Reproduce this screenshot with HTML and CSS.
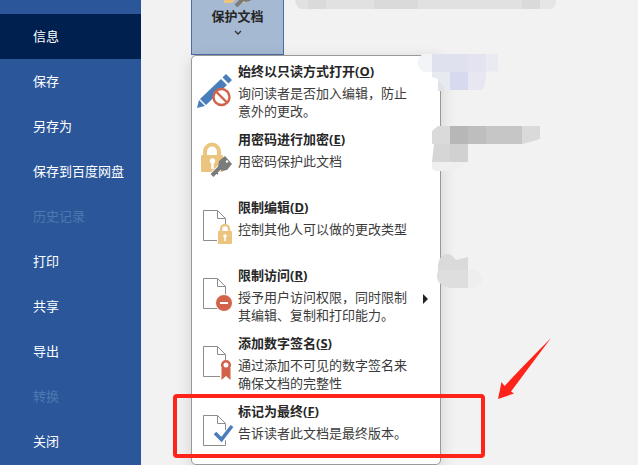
FILE: index.html
```html
<!DOCTYPE html>
<html lang="zh-CN">
<head>
    <meta charset="UTF-8">
    <meta name="viewport" content="width=device-width, initial-scale=1.0">
    <title>信息</title>
    <link rel="stylesheet" href="styles.css">
</head>
<body>
    <div class="backstage">
        <nav class="sidebar">
            <a href="#" class="active">信息</a>
            <a href="#">保存</a>
            <a href="#">另存为</a>
            <a href="#">保存到百度网盘</a>
            <a href="#" class="disabled" aria-disabled="true">历史记录</a>
            <a href="#">打印</a>
            <a href="#">共享</a>
            <a href="#">导出</a>
            <a href="#" class="disabled" aria-disabled="true">转换</a>
            <a href="#">关闭</a>
        </nav>
        <main class="content">
            <button class="protect" type="button">
                <svg class="icon" viewBox="0 0 36 36">
                    <path d="M9 12V6a7 7 0 0 1 14 0v6" fill="none" stroke="#ebc57f" stroke-width="4"/>
                    <rect x="4" y="11" width="22" height="21" rx="1" fill="#ebc57f"/>
                    <path d="M15 34l11-11" stroke="#a6b9d3" stroke-width="7"/>
                    <path d="M16 35l10-10" stroke="#7b7b7b" stroke-width="4"/>
                    <path d="M21 28l1-6 6-6 8 7-6 7-5 1z" fill="#7b7b7b"/>
                </svg>
                <span>保护文档</span>
                <svg class="chevron" viewBox="0 0 8 6"><path d="M1 1l3 3 3-3" fill="none" stroke="#333" stroke-width="1.4"/></svg>
            </button>

            <div class="menu">
                <button class="item" type="button">
                    <svg class="icon" viewBox="0 0 36 48">
                        <path d="M1 46l2-8 6 6z" fill="#4a7ebb"/>
                        <path d="M4 37L25 17l6 6-21 20z" fill="#4a7ebb"/>
                        <path d="M26.500 15.500L30 12l6 6-3.500 3.500z" fill="#4a7ebb"/>
                        <circle cx="25.500" cy="35" r="8" fill="#fff" stroke="#d0634a" stroke-width="2.400"/>
                        <path d="M20 29.500l11 11" stroke="#d0634a" stroke-width="2.400"/>
                    </svg>
                    <span class="text">
                        <strong>始终以只读方式打开(<u>O</u>)</strong>
                        <span>询问读者是否加入编辑，防止意外的更改。</span>
                    </span>
                </button>
                <button class="item" type="button">
                    <svg class="icon" viewBox="0 0 36 48">
                        <path d="M9 26v-4.500a7 7 0 0 1 14 0V26" fill="none" stroke="#ebc57f" stroke-width="4"/>
                        <rect x="5" y="25" width="22" height="17" rx="1" fill="#ebc57f"/>
                        <circle cx="16.500" cy="31" r="2.700" fill="#fff"/>
                        <path d="M16.500 31v8" stroke="#fff" stroke-width="2.500"/>
                        <path d="M16 45.500l9-9" stroke="#fff" stroke-width="6"/>
                        <path d="M16 45.500l9-9" stroke="#7b7b7b" stroke-width="4"/>
                        <path d="M22 37l1-6 6-5 7 8-5 6-5 1z" fill="#7b7b7b"/>
                        <path d="M19 42l3 2" stroke="#7b7b7b" stroke-width="2"/>
                        <circle cx="31" cy="31.500" r="1.200" fill="#fff"/>
                    </svg>
                    <span class="text">
                        <strong>用密码进行加密(<u>E</u>)</strong>
                        <span>用密码保护此文档</span>
                    </span>
                </button>
                <button class="item" type="button">
                    <svg class="icon" viewBox="0 0 36 48">
                        <path d="M7.500 12.500h14l8 8v22h-22zM21.500 12.500v8h8" fill="#fff" stroke="#8c8c8c"/>
                        <rect x="21" y="31" width="16" height="17" fill="#fff"/>
                        <path d="M25 34v-3a3.500 3.500 0 0 1 8 0v3" fill="#fff" stroke="#ebc57f" stroke-width="2.400"/>
                        <rect x="22" y="33" width="14" height="13" rx="1" fill="#ebc57f"/>
                        <circle cx="29" cy="38" r="1.800" fill="#fff"/>
                        <path d="M29 38v5" stroke="#fff" stroke-width="1.600"/>
                    </svg>
                    <span class="text">
                        <strong>限制编辑(<u>D</u>)</strong>
                        <span>控制其他人可以做的更改类型</span>
                    </span>
                </button>
                <button class="item" type="button">
                    <svg class="icon" viewBox="0 0 36 48">
                        <path d="M7.500 12.500h14l8 8v22h-22zM21.500 12.500v8h8" fill="#fff" stroke="#8c8c8c"/>
                        <circle cx="28" cy="37" r="8.500" fill="#d0634a" stroke="#fff"/>
                        <path d="M24 37h8" stroke="#fff" stroke-width="2"/>
                    </svg>
                    <span class="text">
                        <strong>限制访问(<u>R</u>)</strong>
                        <span>授予用户访问权限，同时限制其编辑、复制和打印能力。</span>
                    </span>
                    <svg class="more" viewBox="0 0 5 10"><path d="M0 0l5 5-5 5z" fill="#222"/></svg>
                </button>
                <button class="item" type="button">
                    <svg class="icon" viewBox="0 0 36 48">
                        <path d="M7.500 12.500h14l8 8v22h-22zM21.500 12.500v8h8" fill="#fff" stroke="#8c8c8c"/>
                        <path d="M24 26h12v20H24z" fill="#fff"/>
                        <path d="M25.500 34h9v12l-4.500-4-4.500 4z" fill="#d0634a"/>
                        <circle cx="30" cy="31" r="3.800" fill="#fff" stroke="#d0634a" stroke-width="2.600"/>
                    </svg>
                    <span class="text">
                        <strong>添加数字签名(<u>S</u>)</strong>
                        <span>通过添加不可见的数字签名来确保文档的完整性</span>
                    </span>
                </button>
                <button class="item" type="button">
                    <svg class="icon" viewBox="0 0 36 48">
                        <path d="M7.500 13.500h14l8 8v22h-22zM21.500 13.500v8h8" fill="#fff" stroke="#8c8c8c"/>
                        <path d="M19 31l7 7 10-14" fill="none" stroke="#fff" stroke-width="6"/>
                        <path d="M19 31l6.500 6.500L36 24" fill="none" stroke="#4a7ebb" stroke-width="3.600"/>
                    </svg>
                    <span class="text">
                        <strong>标记为最终(<u>F</u>)</strong>
                        <span>告诉读者此文档是最终版本。</span>
                    </span>
                </button>
            </div>

            <!-- blurred-out file details -->
            <svg class="mosaic" viewBox="0 0 497 300">
                <path d="M154 0h261q0 9-8 9H160q-5-2-6-9z" fill="#e1e1e1"/>
                <path d="M167 0h18v9h-18zM233 0h44v9h-44zM381 0h18v9h-18z" fill="#dadada"/>
                <path d="M399 0h16q0 9-8 9h-8z" fill="#e6e6e6"/>
                <path d="M291 54h-9c-8 5-7 14 1 18h8z" fill="#f3f4f7"/>
                <path d="M291 54h36v18h-36z" fill="#dfe1ee"/>
                <path d="M327 54h18v18h-18z" fill="#e3e4ef"/>
                <path d="M345 54h12v17l-12 1z" fill="#eaebf2"/>
                <path d="M291 72h18v18h-6q-5-1-6-11l-6-2z" fill="#e8eaf1"/>
                <path d="M309 72h18v18h-18z" fill="#d7daee"/>
                <path d="M327 72h18q0 18-6 18h-12z" fill="#e6e7f1"/>
                <path d="M297 80l6 7v4h-6z" fill="#e1e2e5"/>
                <path d="M309 126h-12l-6 5v13h18z" fill="#dadada"/>
                <path d="M309 126h18v18h-18z" fill="#b7b7b7"/>
                <path d="M327 126h18v18h-18z" fill="#bebebe"/>
                <path d="M345 126h36v18h-36z" fill="#c6c6c6"/>
                <path d="M381 126h18v13l-17 5h-1z" fill="#dadada"/>
                <path d="M309 144h-16l-2 18h18z" fill="#d6d6d6"/>
                <path d="M309 144h18v18h-18z" fill="#d1d1d1"/>
                <path d="M291 162h36q-8 7-20 9h-12l-4-2z" fill="#efefef"/>
                <path d="M297 270q-1-14 9-16 5 0 9 6l12-3v13z" fill="#dadada"/>
                <path d="M297 270h30v18h-18q-17-4-12-18z" fill="#dedede"/>
                <path d="M327 270h7q14 10 0 18h-7z" fill="#eee"/>
            </svg>
            <div class="highlight"></div>
            <svg class="arrow" viewBox="0 0 54 62">
                <path d="M53 0Q32 28 13 53.500l3 2L0 61l3.500-17 3 4Q28 25 53 0z" fill="#ff2419"/>
            </svg>
        </main>
    </div>
</body>
</html>
```
FILE: styles.css
```css
* {
    box-sizing: border-box;
}
body {
    margin: 0;
    font-family: "Noto Sans", "Noto Sans CJK SC", sans-serif;
    font-size: 13px;
    line-height: 18px;
    color: #262626;
    background-color: #f2f2f2;
}
button {
    font: inherit;
    color: inherit;
    border: none;
    background: none;
    cursor: pointer;
}
.backstage {
    display: flex;
    height: 100vh;
    overflow: hidden;
}
.sidebar {
    flex: none;
    width: 141px;
    padding-top: 14px;
    background-color: #2b579a;
}
.sidebar a {
    display: flex;
    align-items: center;
    height: 45px;
    padding: 0 0 2px 33px;
    color: #fff;
    text-decoration: none;
    white-space: nowrap;
}
.sidebar a.active {
    background-color: #002050;
}
.sidebar a.disabled {
    color: #4e78af;
}
.content {
    position: relative;
    flex: 1;
    padding-left: 50px;
}
.protect {
    display: flex;
    flex-direction: column;
    align-items: center;
    justify-content: flex-end;
    width: 93px;
    height: 55px;
    padding: 0 0 18px;
    border: 1px solid #4a6da3;
    border-top: none;
    background-color: #a6b9d3;
    font-weight: 700;
    overflow: hidden;
}
.protect .icon {
    flex: none;
    width: 36px;
    height: 36px;
}
.protect .chevron {
    flex: none;
    width: 8px;
    height: 6px;
    margin-top: 5px;
}
.menu {
    width: 250px;
    padding-top: 4px;
    border: 1px solid #999;
    border-radius: 5px;
    background-color: #fff;
    box-shadow: 0 4px 16px rgba(0, 0, 0, 0.14);
}
.item {
    display: flex;
    width: 100%;
    height: 68px;
    padding: 2px 0 0 4px;
    text-align: left;
}
.item:last-child {
    height: 64px;
}
.item .icon {
    flex: none;
    width: 36px;
    height: 48px;
    overflow: visible;
}
.item .text {
    display: flex;
    flex-direction: column;
    gap: 4px;
    width: 178px;
    margin-left: 6px;
    color: #3b3b3b;
}
.item strong {
    font-weight: 700;
    color: #262626;
}
.item .more {
    width: 5px;
    height: 10px;
    margin: 28px 0 0 7px;
}
.mosaic {
    position: absolute;
    top: 0;
    left: 0;
    width: 497px;
    height: 300px;
    pointer-events: none;
}
.highlight {
    position: absolute;
    top: 394px;
    left: 32px;
    width: 312px;
    height: 64px;
    border: 4px solid #ff2419;
    border-radius: 4px;
    pointer-events: none;
}
.arrow {
    position: absolute;
    top: 338px;
    left: 357px;
    width: 54px;
    height: 62px;
}
```
